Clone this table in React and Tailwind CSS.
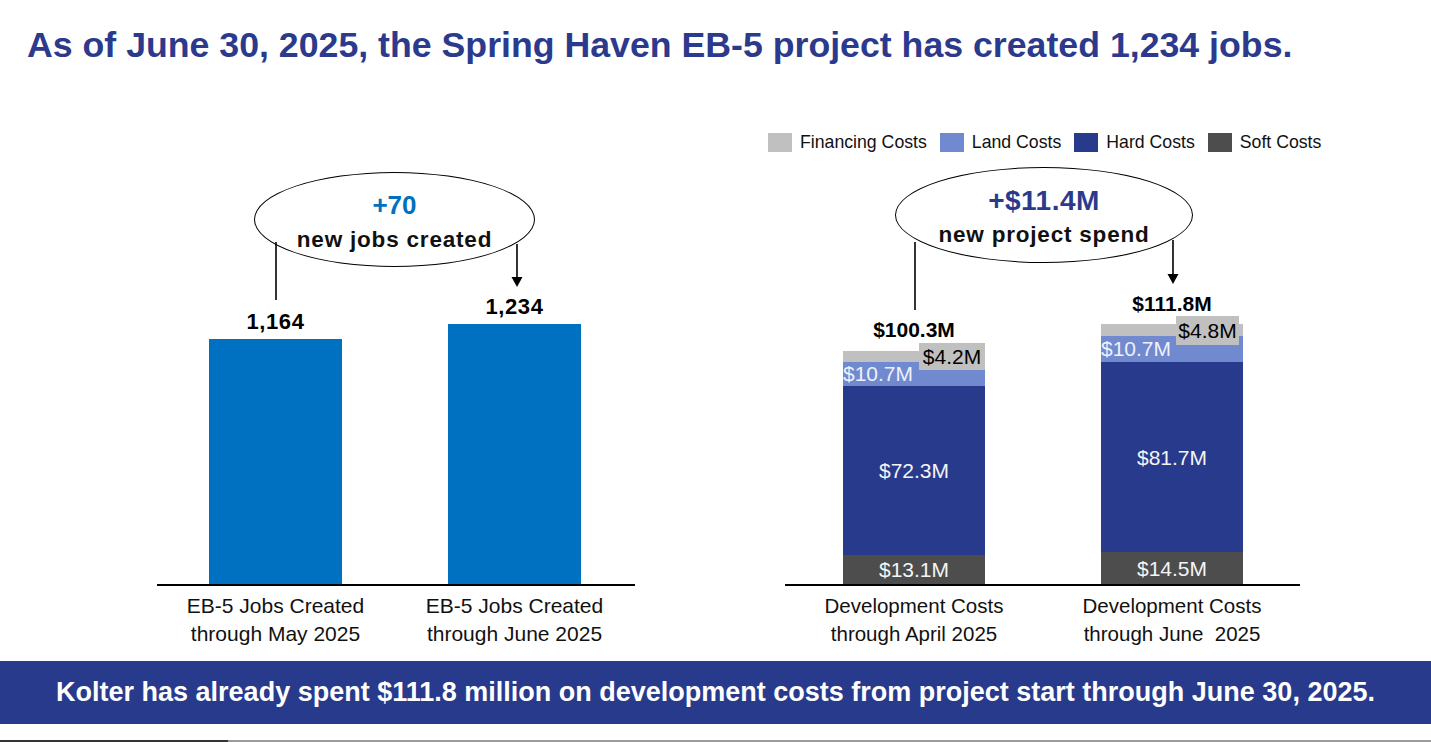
import React from "react";

function Arrow({ className, height, head = true }) {
  return (
    <svg className={className} width="14" height={height} viewBox={`0 0 14 ${height}`}>
      <line x1="7" y1="0" x2="7" y2={head ? height - 8 : height} stroke="#000" strokeWidth="1.6" />
      {head && <polygon points={`1.5,${height - 10} 12.5,${height - 10} 7,${height}`} fill="#000" />}
    </svg>
  );
}

function Legend() {
  const items = [
    ["Financing Costs", "bg-[#c0c0c0]"],
    ["Land Costs", "bg-[#7189cf]"],
    ["Hard Costs", "bg-[#283a8c]"],
    ["Soft Costs", "bg-[#4d4d4d]"],
  ];
  return (
    <div className="h-[44px] pt-[1px] -ml-[17px] flex items-center gap-[13px] text-[17.7px] leading-none text-[#111] whitespace-nowrap">
      {items.map(([label, color]) => (
        <div key={label} className="flex items-center gap-[8px]">
          <div className={`w-[24px] h-[19px] ${color}`} />
          <span>{label}</span>
        </div>
      ))}
    </div>
  );
}

function StackedBar({ total, totalMb, fin, land, hard, soft, finLabel, landLabel, hardLabel, softLabel, boxClass }) {
  return (
    <div className="w-[142px] flex flex-col items-center">
      <div className={`text-[21px] leading-[24px] font-bold text-black whitespace-nowrap ${totalMb}`}>{total}</div>
      <div className="relative w-full flex flex-col">
        <div className={`absolute bg-[#c0c0c0] flex items-center justify-center text-[21px] leading-none text-black ${boxClass}`}>
          {finLabel}
        </div>
        <div className="bg-[#c0c0c0]" style={{ height: fin }} />
        <div className="bg-[#7189cf] flex items-center" style={{ height: land }}>
          <span className="text-[21px] leading-[20px] text-[#eef1fa] whitespace-nowrap">{landLabel}</span>
        </div>
        <div className="bg-[#283a8c] flex items-center justify-center" style={{ height: hard }}>
          <span className="text-[21px] leading-none text-[#f4f4f4]">{hardLabel}</span>
        </div>
        <div className="bg-[#4d4d4d] flex items-center justify-center" style={{ height: soft }}>
          <span className="text-[21px] leading-none text-[#f4f4f4]">{softLabel}</span>
        </div>
      </div>
    </div>
  );
}

export default function App() {
  return (
    <div className="w-[1431px] h-[742px] bg-white flex flex-col font-['Liberation_Sans',Arial,sans-serif] overflow-hidden">
      <div className="h-[120px] pt-[25px] pl-[27px]">
        <h1 className="text-[35.7px] leading-[40px] font-bold text-[#2b3a8c] whitespace-nowrap">
          As of June 30, 2025, the Spring Haven EB-5 project has created 1,234 jobs.
        </h1>
      </div>

      <div className="h-[541px] flex">
        {/* Left chart */}
        <div className="ml-[157px] w-[478px] flex flex-col">
          <div className="h-[44px]" />
          <div className="relative h-[422px] border-b-2 border-black flex items-end pl-[52px] gap-[106px]">
            <div className="w-[133px] flex flex-col items-center">
              <div className="text-[22px] leading-[26px] font-bold tracking-[0.6px] text-black mb-[4px]">1,164</div>
              <div className="w-full h-[245px] bg-[#0070c0]" />
            </div>
            <div className="w-[133px] flex flex-col items-center">
              <div className="text-[22px] leading-[26px] font-bold tracking-[0.6px] text-black mb-[4px]">1,234</div>
              <div className="w-full h-[260px] bg-[#0070c0]" />
            </div>

            <div className="absolute left-[97px] top-[8px] w-[281px] h-[95px] rounded-[50%] border-[1.5px] border-black bg-white flex flex-col items-center pt-[17px]">
              <div className="text-[26px] leading-[30px] font-bold text-[#0070c0]">+70</div>
              <div className="mt-[7px] text-[22.5px] leading-[26px] font-bold tracking-[0.8px] text-[#111] whitespace-nowrap">new jobs created</div>
            </div>
            <Arrow className="absolute left-[112px] top-[78px]" height={58} head={false} />
            <Arrow className="absolute left-[353px] top-[80px]" height={43} />
          </div>
          <div className="pt-[6px] flex pl-[52px] gap-[106px] text-[21px] leading-[28px] text-[#111]">
            <div className="w-[133px] flex flex-col items-center whitespace-nowrap">
              <span>EB-5 Jobs Created</span>
              <span>through May 2025</span>
            </div>
            <div className="w-[133px] flex flex-col items-center whitespace-nowrap">
              <span>EB-5 Jobs Created</span>
              <span>through June 2025</span>
            </div>
          </div>
        </div>

        {/* Right chart */}
        <div className="ml-[150px] w-[515px] flex flex-col">
          <Legend />
          <div className="relative h-[422px] border-b-2 border-black flex items-end pl-[58px] gap-[116px]">
            <StackedBar
              total="$100.3M"
              totalMb="mb-[9px]"
              fin={11}
              land={24}
              hard={169}
              soft={29}
              finLabel="$4.2M"
              landLabel="$10.7M"
              hardLabel="$72.3M"
              softLabel="$13.1M"
              boxClass="right-0 top-[-8px] w-[66px] h-[27px]"
            />
            <StackedBar
              total="$111.8M"
              totalMb="mb-[8px]"
              fin={12}
              land={26}
              hard={190}
              soft={32}
              finLabel="$4.8M"
              landLabel="$10.7M"
              hardLabel="$81.7M"
              softLabel="$14.5M"
              boxClass="right-[4px] top-[-8px] w-[63px] h-[29px]"
            />

            <div className="absolute left-[110px] top-[3px] w-[298px] h-[96px] rounded-[50%] border-[1.5px] border-black bg-white flex flex-col items-center pt-[17px]">
              <div className="text-[28px] leading-[32px] font-bold text-[#2b3a8c] tracking-[0.5px]">+$11.4M</div>
              <div className="mt-[5px] text-[22.5px] leading-[26px] font-bold tracking-[0.8px] text-[#111] whitespace-nowrap">new project spend</div>
            </div>
            <Arrow className="absolute left-[123px] top-[78px]" height={68} head={false} />
            <Arrow className="absolute left-[381px] top-[76px]" height={44} />
          </div>
          <div className="pt-[6px] flex pl-[58px] gap-[116px] text-[20.5px] leading-[28px] text-[#111]">
            <div className="w-[142px] flex flex-col items-center whitespace-pre">
              <span>Development Costs</span>
              <span>through April 2025</span>
            </div>
            <div className="w-[142px] flex flex-col items-center whitespace-pre">
              <span>Development Costs</span>
              <span>through June  2025</span>
            </div>
          </div>
        </div>
      </div>

      <div className="h-[63px] bg-[#283a8c] flex items-center justify-center">
        <p className="text-[27px] leading-none font-bold text-white whitespace-nowrap">
          Kolter has already spent $111.8 million on development costs from project start through June 30, 2025.
        </p>
      </div>
      <div className="flex-1" />
      <div className="h-[2px] flex">
        <div className="w-[228px] bg-[#333]" />
        <div className="flex-1 bg-[#9a9a9a]" />
      </div>
    </div>
  );
}
